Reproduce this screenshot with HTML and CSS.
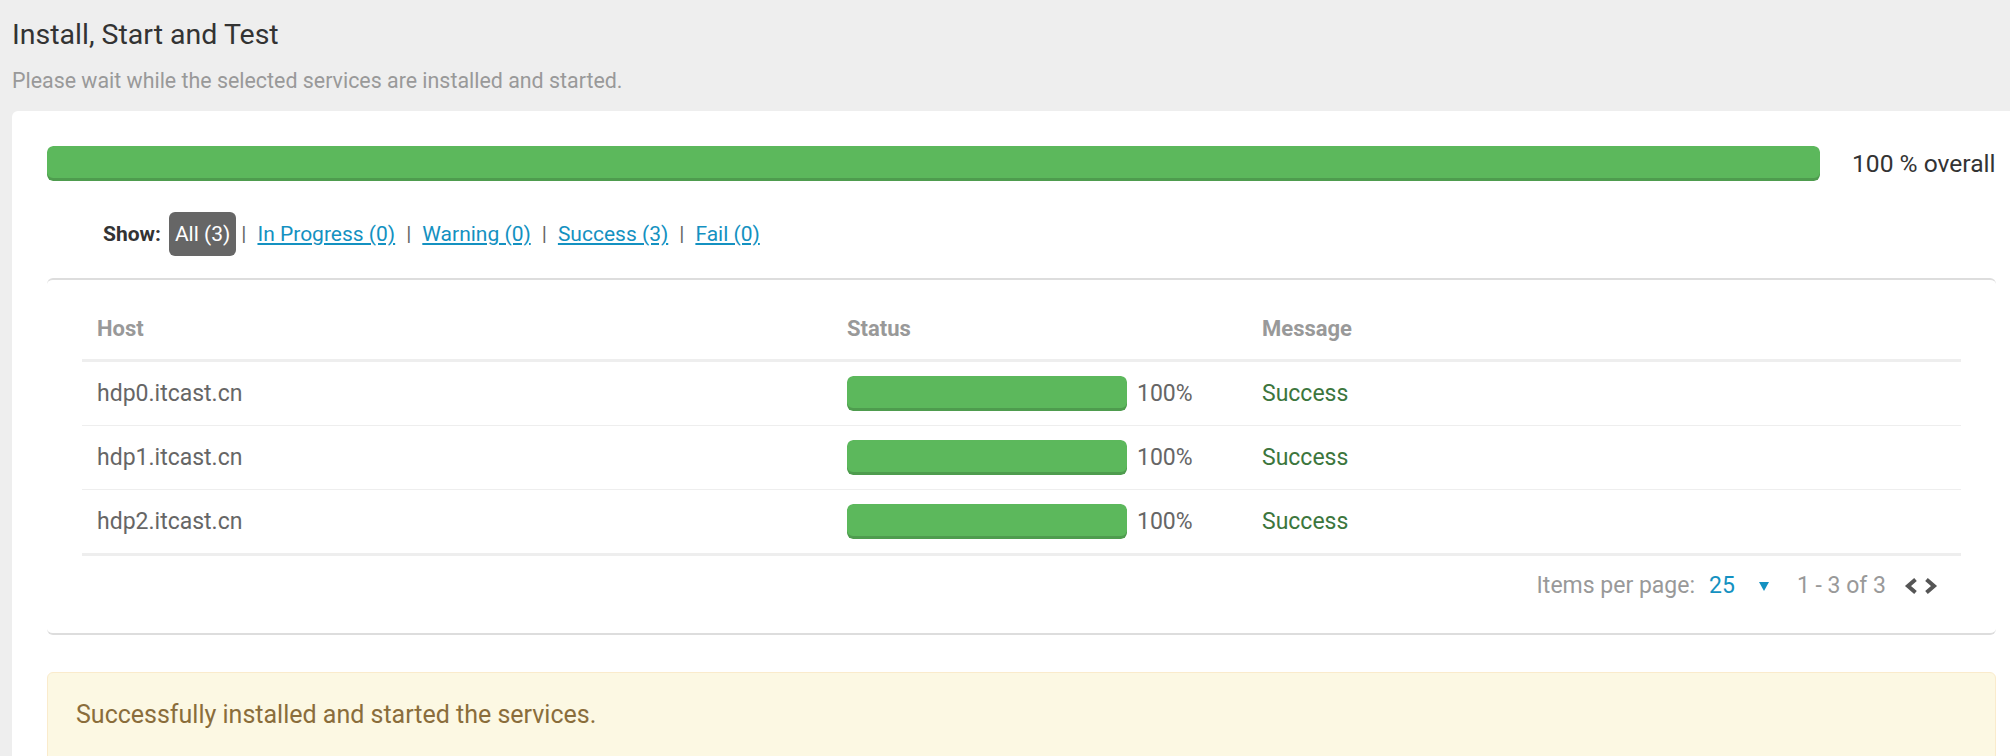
FILE: index.html
```html
<!DOCTYPE html>
<html>
<head>
<meta charset="utf-8">
<link rel="stylesheet" href="styles.css">
</head>
<body>
<div class="page">
  <h1 class="title">Install, Start and Test</h1>
  <p class="subtitle">Please wait while the selected services are installed and started.</p>
  <div class="card">
    <div class="overall">
      <div class="bar bar-overall"><div class="bar-fill" style="width:100%"></div></div>
      <div class="overall-label">100 % overall</div>
    </div>
    <div class="filter">
      <span class="filter-label">Show:</span>
      <span class="badge">All (3)</span>
      <span class="sep sep-first">|</span>
      <a class="filter-link">In Progress (0)</a>
      <span class="sep">|</span>
      <a class="filter-link">Warning (0)</a>
      <span class="sep">|</span>
      <a class="filter-link">Success (3)</a>
      <span class="sep">|</span>
      <a class="filter-link">Fail (0)</a>
    </div>
    <div class="panel">
      <table class="hosts">
        <thead>
          <tr><th class="col-host">Host</th><th class="col-status">Status</th><th>Message</th></tr>
        </thead>
        <tbody>
          <tr>
            <td>hdp0.itcast.cn</td>
            <td><div class="status"><div class="bar bar-small"><div class="bar-fill" style="width:100%"></div></div><span class="pct">100%</span></div></td>
            <td class="msg">Success</td>
          </tr>
          <tr>
            <td>hdp1.itcast.cn</td>
            <td><div class="status"><div class="bar bar-small"><div class="bar-fill" style="width:100%"></div></div><span class="pct">100%</span></div></td>
            <td class="msg">Success</td>
          </tr>
          <tr>
            <td>hdp2.itcast.cn</td>
            <td><div class="status"><div class="bar bar-small"><div class="bar-fill" style="width:100%"></div></div><span class="pct">100%</span></div></td>
            <td class="msg">Success</td>
          </tr>
        </tbody>
      </table>
      <div class="pager">
        <span class="pager-label">Items per page:</span>
        <span class="pager-size">25</span>
        <svg class="pager-caret" width="10" height="10" viewBox="0 0 10 10"><polygon points="0,1 10,1 5,10" fill="#1491c1"/></svg>
        <span class="pager-range">1 - 3 of 3</span>
        <span class="pager-nav">
          <svg width="14" height="18" viewBox="0 0 14 18"><polyline points="11.5,2.5 4,9 11.5,15.5" fill="none" stroke="#555" stroke-width="4"/></svg>
          <svg width="14" height="18" viewBox="0 0 14 18"><polyline points="2.5,2.5 10,9 2.5,15.5" fill="none" stroke="#555" stroke-width="4"/></svg>
        </span>
      </div>
    </div>
    <div class="alert">Successfully installed and started the services.</div>
  </div>
</div>
</body>
</html>
```

FILE: styles.css
```css
html, body {
  margin: 0;
  padding: 0;
  background: #eeeeee;
  font-family: Roboto, "Liberation Sans", sans-serif;
  overflow: hidden;
}

.page {
  padding: 19px 0 0 12px;
}

.title {
  margin: 0;
  font-size: 28.5px;
  line-height: 32px;
  font-weight: 400;
  color: #333;
}

.subtitle {
  margin: 17px 0 0 0;
  font-size: 21.4px;
  line-height: 25px;
  color: #999;
}

.card {
  margin-top: 18px;
  background: #fff;
  border-top-left-radius: 6px;
  padding: 35px 14px 40px 35px;
}

.overall {
  display: flex;
  align-items: center;
}

.bar {
  background: #f5f5f5;
  border-radius: 6px;
  overflow: hidden;
}

.bar-fill {
  height: 100%;
  background: #5cb85c;
  box-shadow: inset 0 -3px 0 rgba(0, 0, 0, 0.15);
  border-radius: 6px;
}

.bar-overall {
  flex: 1;
  height: 35px;
}

.overall-label {
  margin-left: 32px;
  width: 144px;
  font-size: 24.6px;
  color: #333;
  white-space: nowrap;
}

.filter {
  margin-top: 31px;
  padding-left: 56px;
  height: 44px;
  display: flex;
  align-items: center;
  font-size: 21px;
}

.filter-label {
  font-weight: 700;
  color: #333;
  margin-right: 8px;
}

.badge {
  background: #666;
  color: #fff;
  border-radius: 6px;
  height: 44px;
  line-height: 44px;
  padding: 0 6px;
}

.sep {
  color: #666;
  margin: 0 11px;
}

.sep-first {
  margin-left: 5px;
}

.filter-link {
  color: #1491c1;
  text-decoration: underline;
}

.panel {
  margin-top: 22px;
  border-top: 2px solid #ddd;
  border-bottom: 2px solid #ddd;
  border-radius: 6px;
  padding: 16px 35px 0 35px;
}

.hosts {
  width: 100%;
  border-collapse: collapse;
  font-size: 23px;
  color: #666;
}

.hosts th {
  text-align: left;
  font-weight: 700;
  font-size: 22px;
  color: #999;
  padding: 18px 15px 15px 15px;
  line-height: 30px;
  border-bottom: 3px solid #eee;
}

.col-host {
  width: 720px;
}

.col-status {
  width: 385px;
}

.hosts td {
  padding: 14px 15px;
  line-height: 30px;
  vertical-align: middle;
  border-bottom: 1px solid #eee;
}

.hosts tbody tr:last-child td {
  border-bottom: 3px solid #eee;
}

.status {
  display: flex;
  align-items: center;
}

.bar-small {
  width: 280px;
  height: 35px;
}

.pct {
  margin-left: 10px;
}

.msg {
  color: #3c763d;
}

.pager {
  display: flex;
  justify-content: flex-end;
  align-items: center;
  padding: 15px 23px 32px 0;
  font-size: 23px;
  line-height: 30px;
  color: #999;
}

.pager-size {
  margin-left: 14px;
  color: #1491c1;
}

.pager-caret {
  margin-left: 24px;
}

.pager-range {
  margin-left: 28px;
}

.pager-nav {
  margin-left: 18px;
  display: flex;
  gap: 6px;
}

.alert {
  margin-top: 37px;
  background: #fcf8e3;
  border: 1px solid #faebcc;
  border-radius: 6px;
  color: #8a6d3b;
  font-size: 25px;
  line-height: 30px;
  padding: 27px 28px 40px 28px;
}
```
